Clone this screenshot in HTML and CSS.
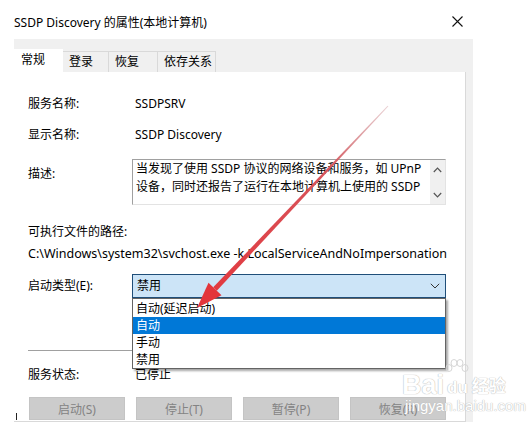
FILE: index.html
```html
<!DOCTYPE html>
<html lang="zh-CN">

<head>
    <meta charset="UTF-8">
    <meta name="viewport" content="width=device-width, initial-scale=1.0">
    <title>SSDP Discovery 的属性</title>
    <link rel="stylesheet" href="styles.css">
</head>

<body>
    <div class="titlebar">
        <span class="title">SSDP Discovery 的属性(本地计算机)</span>
        <svg class="close" width="11" height="11" viewBox="0 0 11 11">
            <path d="M0.5 0.5 L10.5 10.5 M10.5 0.5 L0.5 10.5" stroke="#111" stroke-width="1.1" fill="none" />
        </svg>
    </div>

    <div class="dialog">
        <div class="tabs">
            <div class="tab active">常规</div>
            <div class="tab">登录</div>
            <div class="tab">恢复</div>
            <div class="tab">依存关系</div>
        </div>

        <div class="panel">
            <div class="row row-name">
                <span class="label">服务名称:</span>
                <span class="value">SSDPSRV</span>
            </div>
            <div class="row row-display">
                <span class="label">显示名称:</span>
                <span class="value">SSDP Discovery</span>
            </div>
            <div class="row row-desc">
                <span class="label">描述:</span>
                <div class="desc-box">
                    <div class="desc-text">当发现了使用 SSDP 协议的网络设备和服务，如 UPnP<br>设备，同时还报告了运行在本地计算机上使用的 SSDP</div>
                    <div class="scrollbar">
                        <svg width="9" height="6" viewBox="0 0 9 6">
                            <path d="M0.8 5 L4.5 1.2 L8.2 5" stroke="#555" stroke-width="1.2" fill="none" />
                        </svg>
                        <svg width="9" height="6" viewBox="0 0 9 6">
                            <path d="M0.8 1 L4.5 4.8 L8.2 1" stroke="#555" stroke-width="1.2" fill="none" />
                        </svg>
                    </div>
                </div>
            </div>
            <div class="path-label">可执行文件的路径:</div>
            <div class="path">C:\Windows\system32\svchost.exe -k LocalServiceAndNoImpersonation</div>
            <div class="row row-startup">
                <span class="label">启动类型(E):</span>
                <div class="combo">
                    <span>禁用</span>
                    <svg width="10" height="6" viewBox="0 0 10 6">
                        <path d="M0.8 0.8 L5 5 L9.2 0.8" stroke="#333" stroke-width="1" fill="none" />
                    </svg>
                    <ul class="dropdown">
                        <li>自动(延迟启动)</li>
                        <li class="selected">自动</li>
                        <li>手动</li>
                        <li>禁用</li>
                    </ul>
                </div>
            </div>
            <div class="separator"></div>
            <div class="row row-status">
                <span class="label">服务状态:</span>
                <span class="value">已停止</span>
            </div>
            <div class="buttons">
                <button class="btn">启动(S)</button>
                <button class="btn">停止(T)</button>
                <button class="btn">暂停(P)</button>
                <button class="btn">恢复(R)</button>
            </div>
        </div>
    </div>

    <!-- 红色箭头 -->
    <svg class="arrow" width="527" height="422" viewBox="0 0 527 422">
        <defs>
            <linearGradient id="arrowGrad" x1="388" y1="106" x2="197" y2="308" gradientUnits="userSpaceOnUse">
                <stop offset="0" stop-color="#c98a90" stop-opacity="0.4" />
                <stop offset="0.3" stop-color="#d7565c" />
                <stop offset="1" stop-color="#e3353b" />
            </linearGradient>
        </defs>
        <polygon points="388.4,106.3 387.6,105.7 213.2,287.3 216.8,290.7" fill="url(#arrowGrad)" />
        <polygon points="197,308 208.5,282.8 215,289 221.5,295.2" fill="#e3353b" />
    </svg>

    <div class="watermark">
        <div class="wm-logo">
            <span class="wm-bai">Bai</span>
            <span class="wm-du">
                <svg class="paw" width="26" height="20" viewBox="0 0 26 20">
                    <g fill="none" stroke="#D6D6D6" stroke-width="1">
                        <ellipse cx="5" cy="9" rx="3" ry="3.5" />
                        <ellipse cx="10" cy="4" rx="3" ry="3.5" />
                        <ellipse cx="16" cy="4" rx="3" ry="3.5" />
                        <ellipse cx="21" cy="9" rx="3" ry="3.5" />
                    </g>
                </svg>
                du
            </span>
            <span class="wm-cn">经验</span>
        </div>
        <div class="wm-url">jingyan.baidu.com</div>
    </div>

    <span class="mark"></span>
</body>

</html>
```

FILE: styles.css
```css
* {
    box-sizing: border-box;
}

body {
    margin: 0;
    width: 527px;
    height: 422px;
    overflow: hidden;
    position: relative;
    background-color: #FFF;
    font-family: "Noto Sans", "Noto Sans CJK SC", sans-serif;
    font-size: 12px;
    color: #000;
}

.titlebar {
    height: 39px;
    display: flex;
    align-items: center;
    padding: 4px 0 0 14px;
}

.title {
    font-size: 12px;
}

.close {
    margin-left: auto;
    margin-right: 64px;
}

.dialog {
    margin-left: 14px;
    width: 459px;
    height: 383px;
    padding-right: 7px;
    background-color: #F0F0F0;
}

.tabs {
    height: 33px;
    display: flex;
    align-items: flex-end;
}

.tab {
    height: 21px;
    padding: 0 0 0 6px;
    line-height: 20px;
    white-space: nowrap;
    border: 1px solid #D9D9D9;
    border-bottom: 0;
    border-left: 0;
    background-color: #F0F0F0;
}

.tab:nth-child(2) {
    width: 46px;
}

.tab:nth-child(3) {
    width: 49px;
}

.tab:nth-child(4) {
    width: 58px;
}

.tab.active {
    width: 49px;
    height: 23px;
    padding-left: 7px;
    background-color: #FFF;
    border-color: #FFF;
}

.panel {
    height: 350px;
    padding: 22px 19px 0 14px;
    background-color: #FFF;
    border: 1px solid #D9D9D9;
    border-left: 0;
    border-top: 0;
}

.row {
    display: grid;
    grid-template-columns: 104px 1fr;
    align-items: center;
    line-height: 20px;
}

.value {
    padding-left: 3px;
}

.row-display {
    margin-top: 11px;
}

.row-desc {
    margin-top: 14px;
    align-items: start;
}

.row-desc .label {
    padding-top: 5px;
}

.desc-box {
    height: 46px;
    display: flex;
    border: 1px solid #A0A0A0;
    border-right-color: #E3E3E3;
    border-bottom-color: #E3E3E3;
}

.desc-text {
    flex: 1;
    padding-left: 3px;
    line-height: 18px;
    white-space: nowrap;
}

.scrollbar {
    width: 15px;
    display: flex;
    flex-direction: column;
    justify-content: space-between;
    align-items: center;
    padding: 7px 0 6px;
    background-color: #F0F0F0;
}

.path-label {
    margin-top: 17px;
    line-height: 20px;
}

.path {
    margin-top: 2px;
    font-size: 12.5px;
    line-height: 20px;
    white-space: nowrap;
}

.row-startup {
    margin-top: 10px;
}

.combo {
    position: relative;
    height: 24px;
    display: flex;
    align-items: center;
    justify-content: space-between;
    padding: 0 5px 0 4px;
    background-color: #CCE4F7;
    border: 1px solid #1F4E79;
}

.dropdown {
    position: absolute;
    top: 23px;
    left: -1px;
    right: -1px;
    margin: 0;
    padding: 1px 0 0;
    list-style: none;
    background-color: #FFF;
    border: 1px solid #646464;
    box-shadow: 2px 2px 2px rgba(0, 0, 0, 0.35);
}

.dropdown li {
    height: 17px;
    line-height: 17px;
    padding-left: 3px;
}

.dropdown li.selected {
    background-color: #0078D7;
    color: #FFF;
}

.separator {
    margin-top: 52px;
    height: 1px;
    background-color: #A0A0A0;
}

.row-status {
    margin-top: 14px;
}

.buttons {
    margin-top: 12px;
    padding-left: 1px;
    display: flex;
    justify-content: space-between;
}

.btn {
    width: 96px;
    height: 23px;
    font-family: inherit;
    font-size: 12px;
    color: #838383;
    background-color: #CCCCCC;
    border: 1px solid #C4C4C4;
}

.arrow {
    position: absolute;
    top: 0;
    left: 0;
    pointer-events: none;
}

.watermark {
    position: absolute;
    left: 402px;
    top: 363px;
    color: #FFF;
    text-shadow: 0 0 1px #B4B4B4, 0 0 1px #C4C4C4;
}

.wm-logo {
    display: flex;
    align-items: flex-end;
    height: 36px;
}

.wm-bai {
    font-family: "Liberation Sans", sans-serif;
    font-size: 27px;
    font-weight: bold;
    line-height: 28px;
}

.wm-du {
    position: relative;
    font-family: "Liberation Sans", sans-serif;
    font-size: 17px;
    font-weight: bold;
    line-height: 22px;
    padding: 0 2px 0 3px;
}

.paw {
    position: absolute;
    left: 0;
    top: -18px;
}

.wm-cn {
    font-size: 17px;
    font-weight: bold;
    line-height: 26px;
    margin-left: 2px;
}

.wm-url {
    font-family: "Liberation Sans", sans-serif;
    font-size: 15px;
    line-height: 14px;
    padding-left: 3px;
}

.mark {
    position: absolute;
    left: 16px;
    top: 413px;
    width: 1px;
    height: 7px;
    background-color: #222;
}
```
